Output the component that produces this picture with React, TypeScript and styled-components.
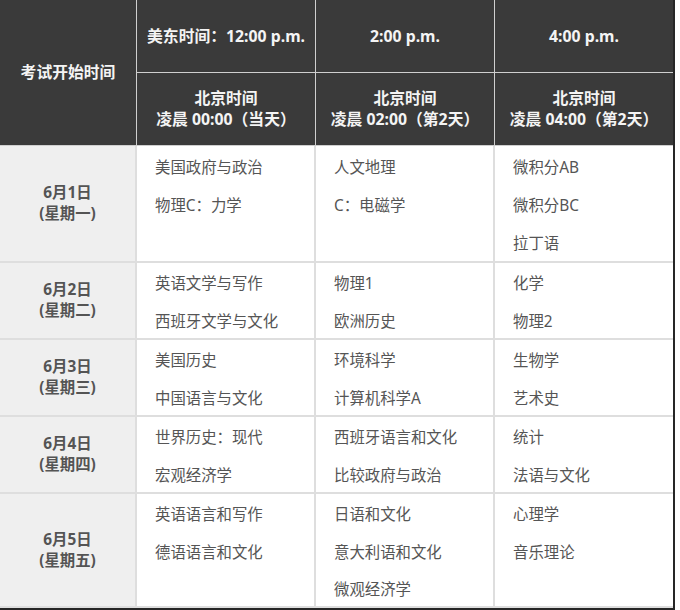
import styled, { createGlobalStyle } from 'styled-components'
import { FC, Fragment } from 'react'

const GlobalStyle = createGlobalStyle`
    body {
        margin: 0;
        background: #ffffff;
        font-family: 'Noto Sans', 'Noto Sans CJK SC', sans-serif;
    }
`;

const Table = styled.div`
    display: grid;
    grid-template-columns: 137px 179px 179px 178px;
    width: fit-content;
    border-right: 2px solid #262626;
    border-bottom: 2px solid #262626;
`;
const HeadCell = styled.div<{ $span?: boolean; $last?: boolean }>`
    grid-row: ${(p) => (p.$span ? 'span 2' : 'auto')};
    background: #3a3a3a;
    color: #f4f4f4;
    font-weight: 700;
    font-size: 15.8px;
    line-height: 21px;
    display: flex;
    flex-direction: column;
    align-items: center;
    justify-content: center;
    text-align: center;
    box-sizing: border-box;
    height: ${(p) => (p.$span ? '146px' : '73px')};
    border-right: ${(p) => (p.$last ? 'none' : '1.5px solid #cfcfcf')};
    border-bottom: 1.5px solid #cfcfcf;
`;
const DateCell = styled.div`
    background: #efefef;
    color: #545454;
    font-weight: 700;
    font-size: 15.4px;
    line-height: 21px;
    display: flex;
    flex-direction: column;
    align-items: center;
    justify-content: center;
    border-right: 2px solid #dedede;
    border-bottom: 2px solid #dedede;
`;
const SubjectCell = styled.div<{ $last?: boolean }>`
    background: #ffffff;
    color: #555555;
    font-size: 15.4px;
    padding-left: 18px;
    display: flex;
    flex-direction: column;
    border-right: ${(p) => (p.$last ? 'none' : '2px solid #dedede')};
    border-bottom: 2px solid #dedede;
`;
const Subject = styled.div<{ $tall?: boolean }>`
    box-sizing: border-box;
    height: ${(p) => (p.$tall ? '38.2px' : '37.5px')};
    padding-top: 5.5px;
    line-height: 32px;
    white-space: nowrap;
`;

const headTop = ['美东时间：12:00 p.m.', '2:00 p.m.', '4:00 p.m.'];
const headBottom = ['凌晨 00:00（当天）', '凌晨 02:00（第2天）', '凌晨 04:00（第2天）'];

const days = [
    { date: '6月1日', week: '(星期一)', slots: [['美国政府与政治', '物理C：力学'], ['人文地理', 'C：电磁学'], ['微积分AB', '微积分BC', '拉丁语']] },
    { date: '6月2日', week: '(星期二)', slots: [['英语文学与写作', '西班牙文学与文化'], ['物理1', '欧洲历史'], ['化学', '物理2']] },
    { date: '6月3日', week: '(星期三)', slots: [['美国历史', '中国语言与文化'], ['环境科学', '计算机科学A'], ['生物学', '艺术史']] },
    { date: '6月4日', week: '(星期四)', slots: [['世界历史：现代', '宏观经济学'], ['西班牙语言和文化', '比较政府与政治'], ['统计', '法语与文化']] },
    { date: '6月5日', week: '(星期五)', slots: [['英语语言和写作', '德语语言和文化'], ['日语和文化', '意大利语和文化', '微观经济学'], ['心理学', '音乐理论']] },
];

const App: FC = () => {
    return (
        <>
            <GlobalStyle />
            <Table>
                <HeadCell $span>考试开始时间</HeadCell>
                {headTop.map((t, i) => (
                    <HeadCell key={t} $last={i === 2}>{t}</HeadCell>
                ))}
                {headBottom.map((t, i) => (
                    <HeadCell key={t} $last={i === 2}>
                        <div>北京时间</div>
                        <div>{t}</div>
                    </HeadCell>
                ))}
                {days.map((d, row) => (
                    <Fragment key={d.date}>
                        <DateCell>
                            <div>{d.date}</div>
                            <div>{d.week}</div>
                        </DateCell>
                        {d.slots.map((s, i) => (
                            <SubjectCell key={d.date + i} $last={i === 2}>
                                {s.map((name) => (
                                    <Subject key={name} $tall={row === 0}>{name}</Subject>
                                ))}
                            </SubjectCell>
                        ))}
                    </Fragment>
                ))}
            </Table>
        </>
    )
}
export default App
